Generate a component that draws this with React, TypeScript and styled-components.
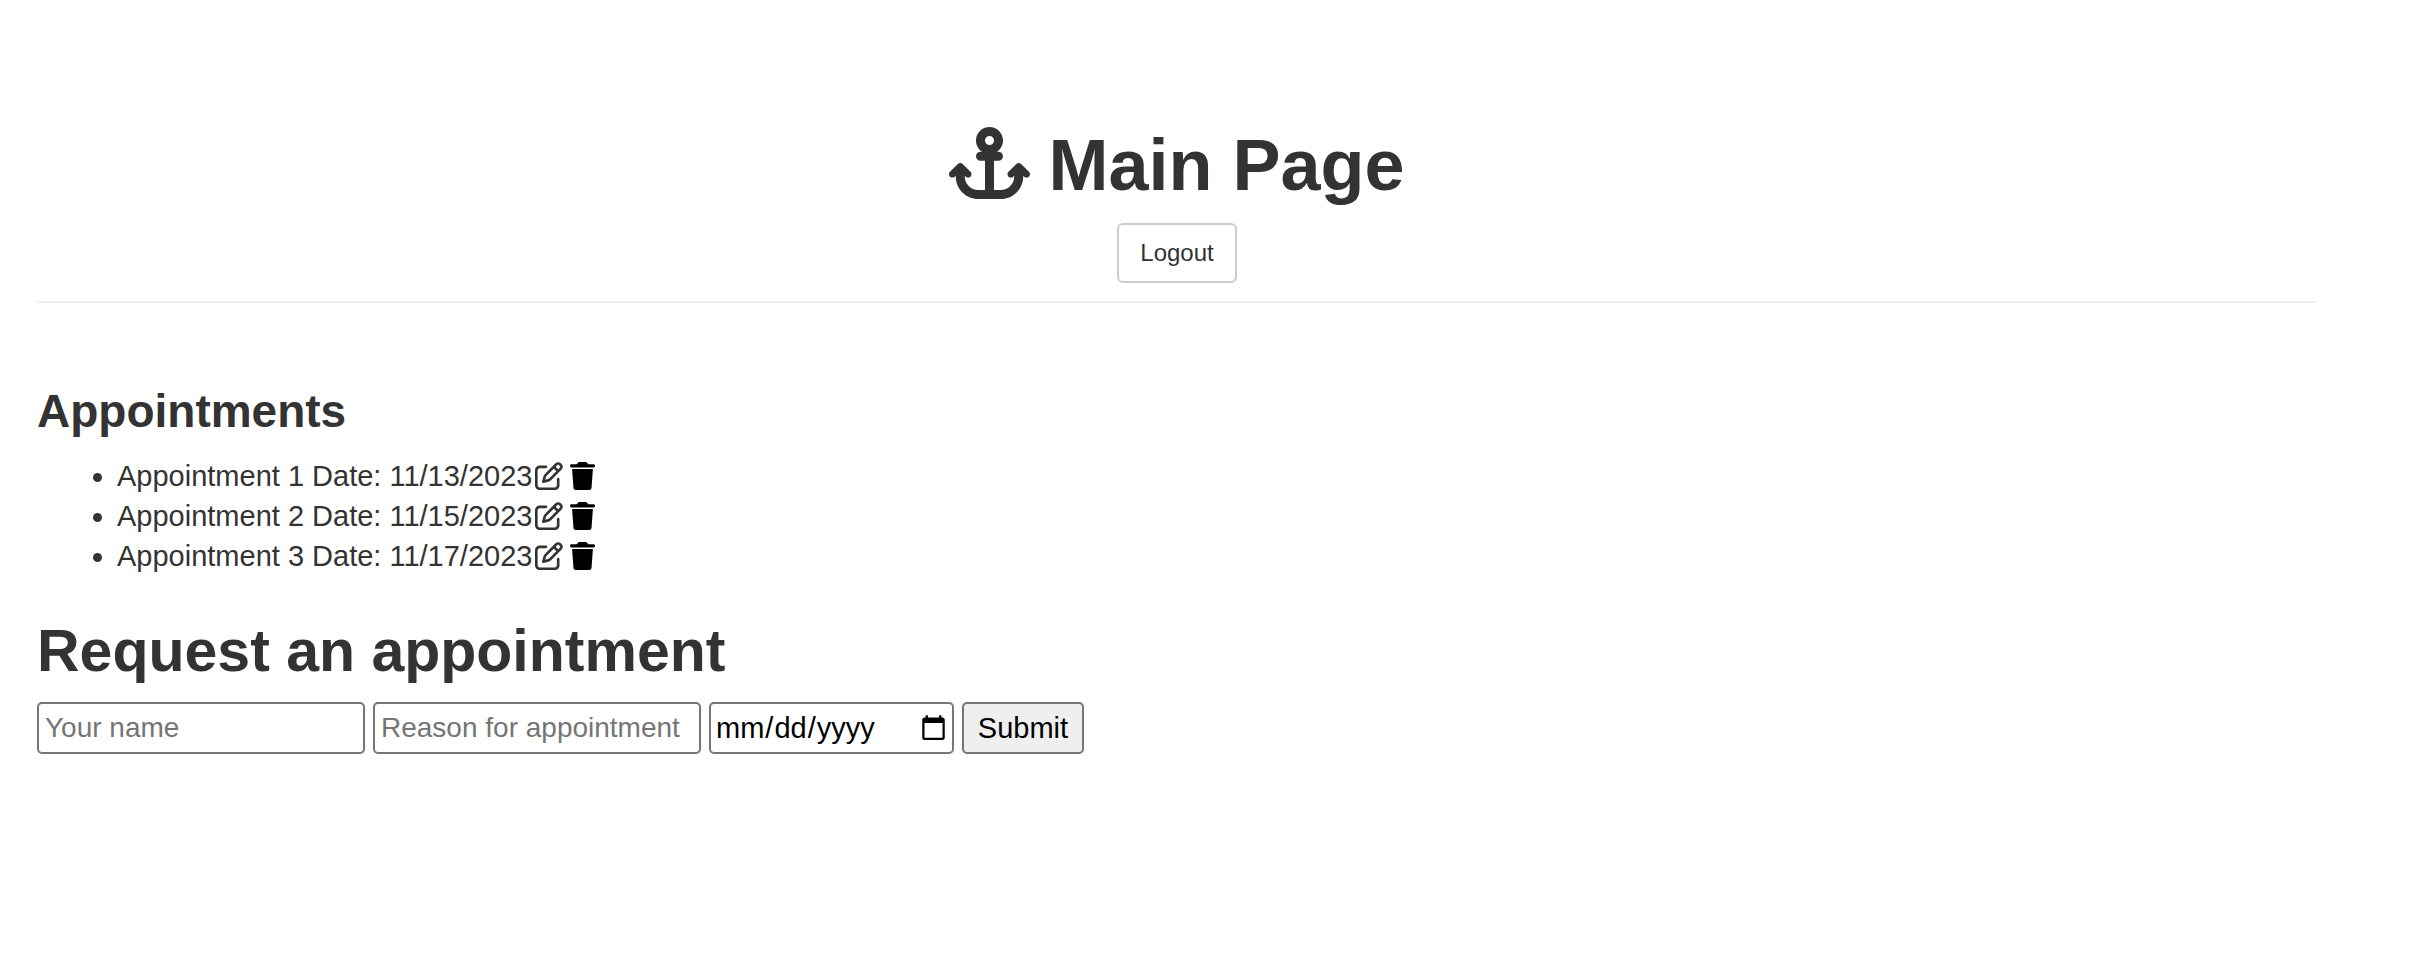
import React from "react";
import styled, { createGlobalStyle } from "styled-components";
import { FaAnchor, FaRegPenToSquare } from "react-icons/fa6";

const GlobalStyle = createGlobalStyle`
  * { box-sizing: border-box; }
  body {
    margin: 0;
    background: #fff;
    color: #333;
    font-family: "Liberation Sans", Arial, Helvetica, sans-serif;
    font-size: 28px;
    line-height: 40px;
  }
`;

const Page = styled.main`
  padding: 126px 97px 40px 37px;
`;

const Header = styled.header`
  display: flex;
  flex-direction: column;
  align-items: center;
  padding-bottom: 18px;
  border-bottom: 2px solid #eee;
`;

const Title = styled.h1`
  height: 79px;
  margin: 0 0 18px;
  font-size: 72px;
  line-height: 79px;
  font-weight: 700;
`;

const TitleIcon = styled(FaAnchor)`
  width: 81px;
  height: 72px;
  margin-right: 18px;
  vertical-align: -9px;
`;

const LogoutButton = styled.button`
  height: 60px;
  padding: 0 21px;
  border: 2px solid #ccc;
  border-radius: 6px;
  background: #fff;
  color: #333;
  font: inherit;
  font-size: 24px;
  line-height: 36px;
  cursor: pointer;
`;

const SectionTitle = styled.h3`
  margin: 82px 0 18px;
  font-size: 46px;
  line-height: 53px;
  font-weight: 700;
`;

const FormTitle = styled.h2`
  margin: 42px 0 18px;
  font-size: 59px;
  line-height: 66px;
  font-weight: 700;
`;

const List = styled.ul`
  margin: 0;
  padding-left: 80px;
  font-size: 29px;
`;

const Entry = styled.li`
  height: 40px;
`;

const Actions = styled.span`
  display: inline-flex;
  gap: 7px;
  margin-left: 3px;
  vertical-align: -4px;
`;

const IconButton = styled.button<{ $color: string }>`
  padding: 0;
  border: 0;
  background: none;
  color: ${(p) => p.$color};
  font-size: 28px;
  line-height: 28px;
  cursor: pointer;

  svg {
    display: block;
  }
`;

const Form = styled.form`
  display: flex;
  gap: 8px;
`;

const Field = styled.input`
  width: 328px;
  height: 52px;
  padding: 2px 6px;
  border: 2px solid #767676;
  border-radius: 5px;
  background: #fff;
  color: #000;
  font: inherit;

  &::placeholder {
    color: #757575;
  }
`;

const DateField = styled(Field)`
  width: 245px;
  padding: 2px 2px 2px 4px;
  font-size: 29px;
`;

const SubmitButton = styled.button`
  width: 122px;
  height: 52px;
  padding: 0;
  border: 2px solid #767676;
  border-radius: 5px;
  background: #efefef;
  color: #000;
  font: inherit;
  font-size: 29px;
  cursor: pointer;
`;

function TrashIcon() {
  return (
    <svg width="25" height="28" viewBox="0 0 25 28" fill="currentColor" aria-hidden="true">
      <path d="M1.2 2.3H6.6L8.2.6Q8.7.1 9.4.1H15.6Q16.3.1 16.8.6L18.4 2.3H23.8Q25 2.5 25 3.9T23.8 5.5H1.2Q0 5.3 0 3.9T1.2 2.3Z" />
      <path d="M2.1 7H22.9L21.5 26Q21.3 27.9 19.4 27.9H5.6Q3.7 27.9 3.5 26Z" />
    </svg>
  );
}

const appointments = [
  { name: "Appointment 1", date: "11/13/2023" },
  { name: "Appointment 2", date: "11/15/2023" },
  { name: "Appointment 3", date: "11/17/2023" },
];

export default function App() {
  return (
    <>
      <GlobalStyle />
      <Page>
        <Header>
          <Title>
            <TitleIcon aria-hidden="true" />
            Main Page
          </Title>
          <LogoutButton type="button">Logout</LogoutButton>
        </Header>
        <section>
          <SectionTitle>Appointments</SectionTitle>
          <List>
            {appointments.map(({ name, date }) => (
              <Entry key={name}>
                {name} Date: {date}
                <Actions>
                  <IconButton type="button" $color="#333" aria-label={`Edit ${name}`}>
                    <FaRegPenToSquare />
                  </IconButton>
                  <IconButton type="button" $color="#000" aria-label={`Delete ${name}`}>
                    <TrashIcon />
                  </IconButton>
                </Actions>
              </Entry>
            ))}
          </List>
        </section>
        <section>
          <FormTitle>Request an appointment</FormTitle>
          <Form onSubmit={(e: React.FormEvent) => e.preventDefault()}>
            <Field type="text" name="name" placeholder="Your name" aria-label="Your name" />
            <Field
              type="text"
              name="reason"
              placeholder="Reason for appointment"
              aria-label="Reason for appointment"
            />
            <DateField type="date" name="date" aria-label="Appointment date" />
            <SubmitButton type="submit">Submit</SubmitButton>
          </Form>
        </section>
      </Page>
    </>
  );
}
